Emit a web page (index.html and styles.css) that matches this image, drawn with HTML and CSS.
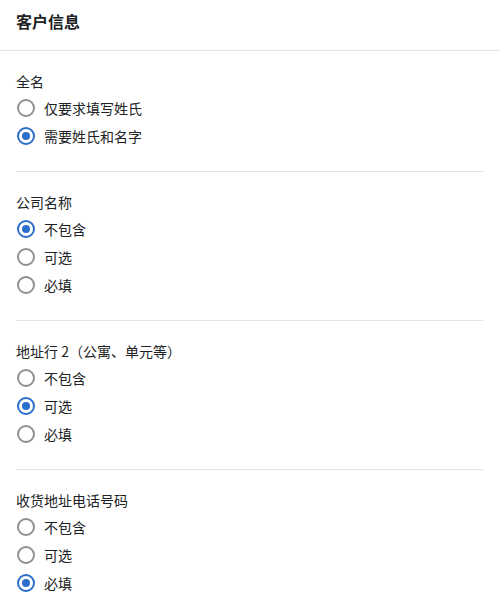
FILE: index.html
```html
<!DOCTYPE html>
<html lang="zh-CN">
<head>
<meta charset="utf-8">
<link rel="stylesheet" href="styles.css">
</head>
<body>
<div class="card">
  <div class="header"><h2 class="title">客户信息</h2></div>
  <div class="section">
    <div class="label">全名</div>
    <div class="row"><span class="radio"></span><span>仅要求填写姓氏</span></div>
    <div class="row"><span class="radio checked"></span><span>需要姓氏和名字</span></div>
  </div>
  <div class="section">
    <div class="label">公司名称</div>
    <div class="row"><span class="radio checked"></span><span>不包含</span></div>
    <div class="row"><span class="radio"></span><span>可选</span></div>
    <div class="row"><span class="radio"></span><span>必填</span></div>
  </div>
  <div class="section">
    <div class="label">地址行 2（公寓、单元等）</div>
    <div class="row"><span class="radio"></span><span>不包含</span></div>
    <div class="row"><span class="radio checked"></span><span>可选</span></div>
    <div class="row"><span class="radio"></span><span>必填</span></div>
  </div>
  <div class="section last">
    <div class="label">收货地址电话号码</div>
    <div class="row"><span class="radio"></span><span>不包含</span></div>
    <div class="row"><span class="radio"></span><span>可选</span></div>
    <div class="row"><span class="radio checked"></span><span>必填</span></div>
  </div>
</div>
</body>
</html>
```
FILE: styles.css
```css
html, body {
  margin: 0;
  padding: 0;
  background: #ffffff;
}
body {
  font-family: "Noto Sans CJK SC", "Noto Sans", sans-serif;
  font-size: 14px;
  color: #202223;
}
.header {
  height: 50px;
  border-bottom: 1px solid #e1e3e5;
  padding: 0 16px;
  display: flex;
  align-items: center;
}
.title {
  margin: 0;
  font-size: 16px;
  font-weight: 700;
  line-height: 24px;
  padding-bottom: 8px;
}
.section {
  margin: 0 17px 0 16px;
  padding: 20px 0;
  border-bottom: 1px solid #e1e3e5;
}
.section.last {
  border-bottom: none;
}
.label {
  line-height: 20px;
  margin-bottom: 3px;
}
.row {
  height: 28px;
  display: flex;
  align-items: center;
  gap: 9px;
}
.row:last-child {
  margin-bottom: 1px;
}
.radio {
  box-sizing: border-box;
  width: 18px;
  height: 18px;
  border-radius: 50%;
  border: 2px solid #8c9196;
  margin-left: 1px;
  display: flex;
  align-items: center;
  justify-content: center;
}
.radio.checked {
  border-color: #2c6ecb;
}
.radio.checked::after {
  content: "";
  width: 8px;
  height: 8px;
  border-radius: 50%;
  background: #2c6ecb;
}
```
